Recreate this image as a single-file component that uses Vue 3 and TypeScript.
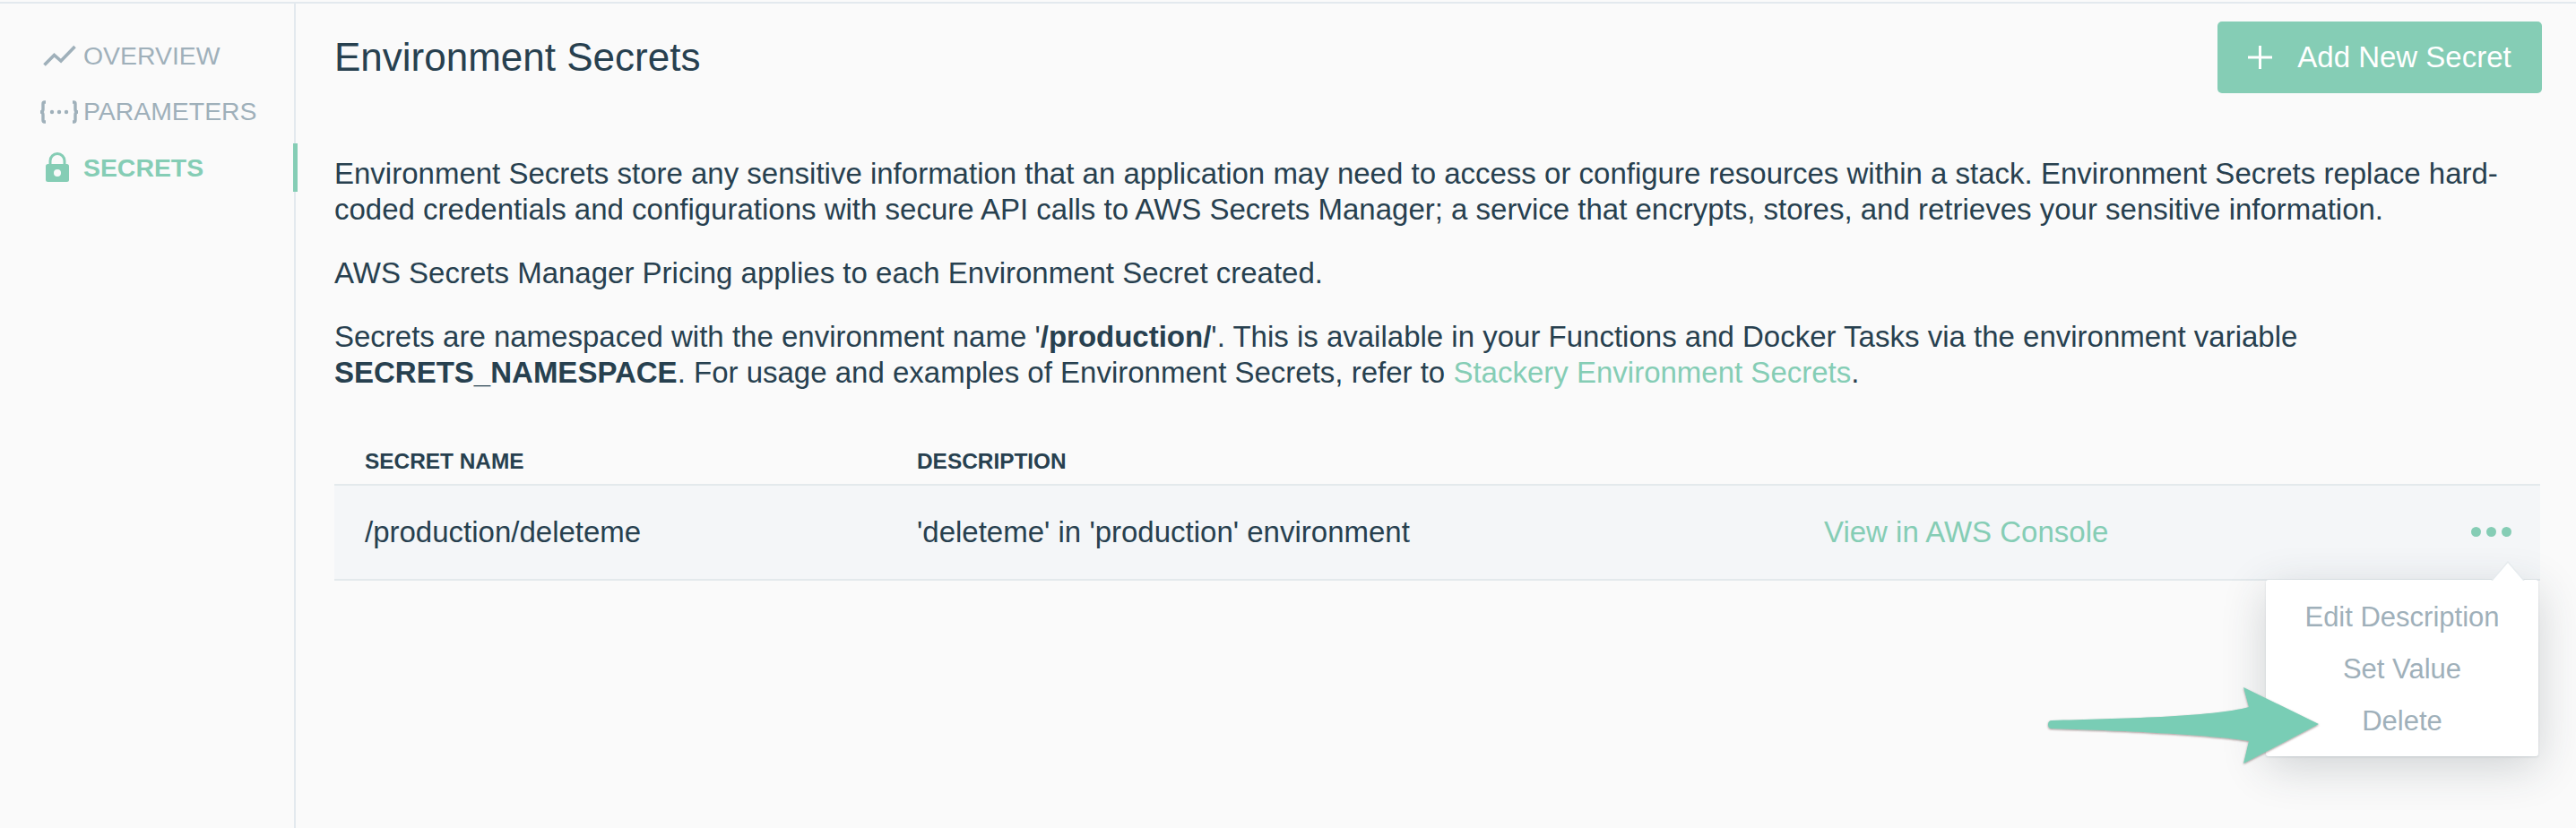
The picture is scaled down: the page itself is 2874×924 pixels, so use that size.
<script setup lang="ts">
interface MenuItem { label: string }
const menu: MenuItem[] = [{ label: 'Edit Description' }, { label: 'Set Value' }, { label: 'Delete' }]
</script>

<template>
  <div class="page">
    <aside class="side">
      <nav class="nav">
        <a class="item">
          <svg class="ico" width="44" height="28" viewBox="0 0 44 28"><polyline points="5.5,24.5 16.5,13.5 24,20 39.5,4" fill="none" stroke="#9fb0ba" stroke-width="3.6"/></svg>
          <span>OVERVIEW</span>
        </a>
        <a class="item">
          <svg class="ico" width="44" height="28" viewBox="0 0 44 28"><g fill="none" stroke="#9fb0ba" stroke-width="3.4"><path d="M7 3H5.5Q4 3 4 5V11Q4 14 1 14Q4 14 4 17V23Q4 25 5.5 25H7"/><path d="M37 3H38.5Q40 3 40 5V11Q40 14 43 14Q40 14 40 17V23Q40 25 38.500 25H37"/></g><g fill="#9fb0ba"><circle cx="14" cy="14" r="2.200"/><circle cx="22" cy="14" r="2.200"/><circle cx="30" cy="14" r="2.200"/></g></svg>
          <span>PARAMETERS</span>
        </a>
        <a class="item active">
          <svg class="ico" width="44" height="34" viewBox="0 0 44 34"><path d="M12 15V9.500a8 8 0 0 1 16 0V15" fill="none" stroke="#85cdb5" stroke-width="3"/><rect x="7" y="13" width="26" height="20" rx="2.500" fill="#85cdb5"/><circle cx="20" cy="23" r="4" fill="#fafafa"/></svg>
          <span>SECRETS</span>
        </a>
      </nav>
    </aside>
    <main class="main">
      <header class="head">
        <h1>Environment Secrets</h1>
        <button class="add">
          <svg width="27" height="26" viewBox="0 0 27 26"><path d="M13.500 0V26M0 13H27" stroke="#fff" stroke-width="3"/></svg>
          <span>Add New Secret</span>
        </button>
      </header>
      <section class="copy">
        <p>Environment Secrets store any sensitive information that an application may need to access or configure resources within a stack. Environment Secrets replace hard-coded credentials and configurations with secure API calls to AWS Secrets Manager; a service that encrypts, stores, and retrieves your sensitive information.</p>
        <p>AWS Secrets Manager Pricing applies to each Environment Secret created.</p>
        <p>Secrets are namespaced with the environment name '<b>/production/</b>'. This is available in your Functions and Docker Tasks via the environment variable <b>SECRETS_NAMESPACE</b>. For usage and examples of Environment Secrets, refer to <a class="link">Stackery Environment Secrets</a>.</p>
      </section>
      <div class="table">
        <div class="thead">
          <div class="c1">SECRET NAME</div>
          <div class="c2">DESCRIPTION</div>
        </div>
        <div class="row">
          <div class="c1">/production/deleteme</div>
          <div class="c2">'deleteme' in 'production' environment</div>
          <a class="c3 link">View in AWS Console</a>
          <div class="dots"><i></i><i></i><i></i></div>
          <svg class="caret" width="38" height="22" viewBox="0 0 38 22"><path d="M1 22L19 1L37 22" fill="#fff" stroke="#e6ebee" stroke-width="1.500"/></svg>
          <ul class="menu">
            <li v-for="m in menu" :key="m.label">{{ m.label }}</li>
          </ul>
        </div>
      </div>
    </main>
    <svg class="arrow" width="320" height="100" viewBox="2280 760 320 100">
      <defs><filter id="ds" x="-5%" y="-10%" width="110%" height="125%"><feDropShadow dx="0" dy="1" stdDeviation="0.8" flood-color="#5a3a3a" flood-opacity="0.55"/></filter></defs>
      <path filter="url(#ds)" fill="#79cdb5" d="M2289 804C2360 802 2470 800 2509 789L2503 767L2587 808L2503 852L2509 827C2470 820 2360 815 2289 813Q2285 813 2285 808.500Q2285 804 2289 804Z"/>
    </svg>
  </div>
</template>

<style>
html, body { margin: 0; background: #fafafa; }
</style>

<style scoped>
.page {
  position: relative;
  width: 2874px;
  height: 924px;
  overflow: hidden;
  display: flex;
  box-sizing: border-box;
  margin: 0;
  padding-top: 2px;
  background: #fafafa;
  color: #27404f;
  font-family: "Liberation Sans", Arial, sans-serif;
}
.page::before {
  content: "";
  position: absolute;
  left: 0;
  right: 0;
  top: 2px;
  height: 2px;
  background: #e3e9ee;
}
.side {
  width: 330px;
  flex: none;
  box-sizing: border-box;
  border-right: 2px solid #e3e9ee;
  padding-top: 33px;
}
.nav { display: flex; flex-direction: column; }
.item {
  position: relative;
  display: flex;
  align-items: center;
  height: 54px;
  margin-bottom: 8.500px;
  padding-left: 44px;
  gap: 5px;
  font-size: 28.400px;
  color: #9fb0ba;
}
.item.active { color: #85cdb5; font-weight: 700; }
.item.active::after {
  content: "";
  position: absolute;
  right: -4px;
  top: 0;
  bottom: 0;
  width: 5px;
  background: #85cdb5;
}
.ico { flex: none; }
.main {
  flex: 1;
  min-width: 0;
  padding: 22px 38px 0 43px;
}
.head {
  display: flex;
  justify-content: space-between;
  align-items: center;
  height: 80px;
}
h1 { margin: 0; font-size: 44px; font-weight: 400; }
.add {
  display: flex;
  align-items: center;
  justify-content: center;
  gap: 28px;
  width: 362px;
  height: 80px;
  border: 0;
  border-radius: 5px;
  background: #85cdb5;
  color: #fff;
  font: 400 33px "Liberation Sans", Arial, sans-serif;
}
.copy { margin-top: 70px; font-size: 33px; line-height: 40px; }
.copy p { margin: 0 0 31px; }
.link { color: #85cdb5; }
.table { margin: 54px 2px 0 0; }
.thead {
  display: flex;
  align-items: center;
  height: 50px;
  padding-left: 34px;
  font-size: 24.400px;
  font-weight: 700;
  border-bottom: 2px solid #e3e9ec;
}
.c1 { width: 616px; flex: none; }
.c2 { width: 1012px; flex: none; }
.row {
  position: relative;
  display: flex;
  align-items: center;
  height: 104px;
  padding-left: 34px;
  background: #f4f6f8;
  border-bottom: 2px solid #e3e9ec;
  font-size: 33px;
}
.dots {
  position: absolute;
  right: 32px;
  top: 46px;
  display: flex;
  gap: 6px;
}
.dots i { width: 11px; height: 11px; border-radius: 50%; background: #85cdb5; }
.caret {
  position: absolute;
  z-index: 2;
  right: 17px;
  top: 84px;
}
.menu {
  position: absolute;
  z-index: 1;
  list-style: none;
  margin: 0;
  padding: 13px 0 10px;
  right: 2px;
  top: 105px;
  width: 304px;
  box-sizing: border-box;
  background: #fff;
  border-radius: 3px;
  box-shadow: 0 1px 2px rgba(110, 130, 145, .25), 0 12px 50px rgba(40, 55, 65, .2);
  font-size: 31px;
  color: #9fb0ba;
  text-align: center;
}
.menu li { height: 58px; line-height: 58px; }
.arrow { position: absolute; z-index: 3; left: 2280px; top: 760px; }
</style>
